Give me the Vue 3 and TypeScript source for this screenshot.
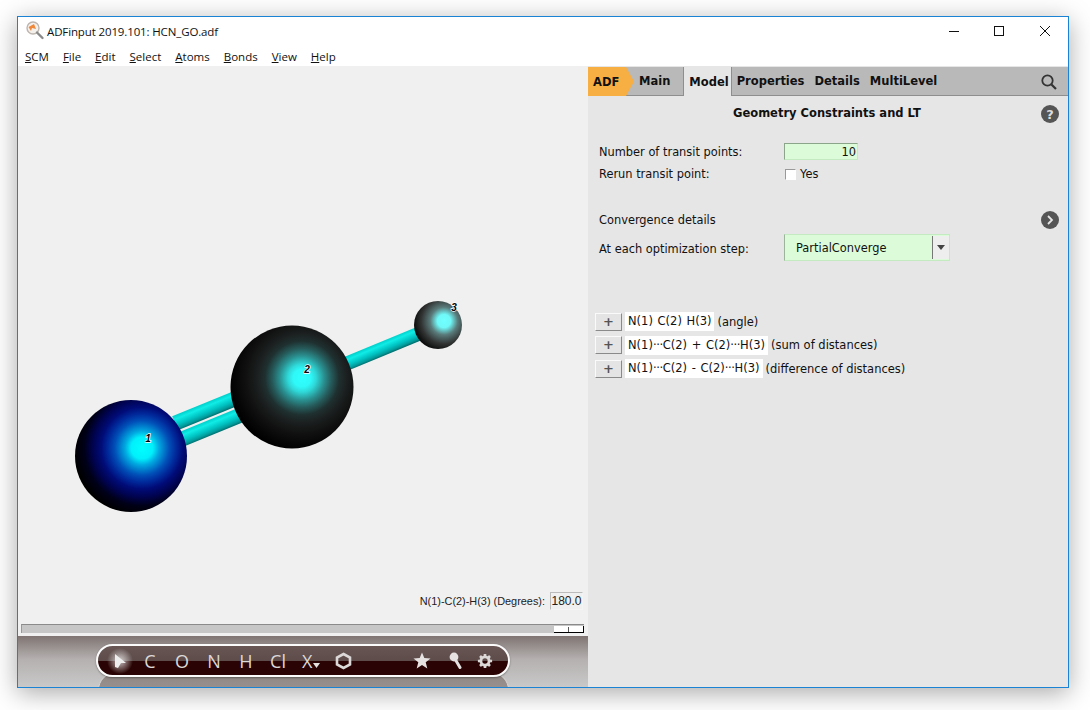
<script setup lang="ts">
const menus = [
  { k: 'S', r: 'CM' }, { k: 'F', r: 'ile' }, { k: 'E', r: 'dit' }, { k: 'S', r: 'elect' },
  { k: 'A', r: 'toms' }, { k: 'B', r: 'onds' }, { k: 'V', r: 'iew' }, { k: 'H', r: 'elp' },
]
const constraints = [
  { label: ['N(1) C(2) H(3)'], note: '(angle)' },
  { label: ['N(1)', 'C(2) + C(2)', 'H(3)'], note: '(sum of distances)' },
  { label: ['N(1)', 'C(2) - C(2)', 'H(3)'], note: '(difference of distances)' },
]
const elements = ['C', 'O', 'N', 'H', 'Cl']
</script>

<template>
  <div class="stage">
    <div class="window">
      <header class="titlebar">
        <svg class="appicon" width="20" height="20" viewBox="0 0 20 20">
          <circle cx="8" cy="7" r="6" fill="#f4f0ec" stroke="#bdb5ae" stroke-width="1.4" />
          <path d="M3.5 6 L9 3 L11 8 L7 7 L6 10 Z" fill="#f0883a" />
          <path d="M12 11.5 L17.5 17" stroke="#8a8a8a" stroke-width="2.4" stroke-linecap="round" />
        </svg>
        <span class="title">ADFinput 2019.101: HCN_GO.adf</span>
        <div class="winbtns">
          <svg width="10" height="10" viewBox="0 0 10 10"><path d="M0 5.5H10" stroke="#111" /></svg>
          <svg width="10" height="10" viewBox="0 0 10 10"><rect x=".5" y=".5" width="9" height="9" fill="none" stroke="#111" /></svg>
          <svg class="closebtn" width="10" height="10" viewBox="0 0 10 10"><path d="M0 0L10 10M10 0L0 10" stroke="#111" /></svg>
        </div>
      </header>
      <nav class="menubar">
        <span v-for="m in menus" :key="m.k + m.r"><u>{{ m.k }}</u>{{ m.r }}</span>
      </nav>
      <div class="body">
        <section class="left">
          <div class="viewer">
            <svg class="molecule" width="570" height="556" viewBox="18 66 570 556">
              <defs>
                <radialGradient id="gN" gradientUnits="userSpaceOnUse" cx="142" cy="448" r="68" fx="142" fy="448">
                  <stop offset="0" stop-color="#00ffff" />
                  <stop offset=".16" stop-color="#00f0fb" />
                  <stop offset=".25" stop-color="#00a8e0" />
                  <stop offset=".4" stop-color="#0050b8" />
                  <stop offset=".5" stop-color="#002a9c" />
                  <stop offset=".6" stop-color="#000c78" />
                  <stop offset=".72" stop-color="#000350" />
                  <stop offset=".85" stop-color="#000018" />
                  <stop offset="1" stop-color="#000000" />
                </radialGradient>
                <radialGradient id="gC" gradientUnits="userSpaceOnUse" cx="302" cy="378" r="74" fx="302" fy="378">
                  <stop offset="0" stop-color="#2fffff" />
                  <stop offset=".12" stop-color="#2ff8f8" />
                  <stop offset=".19" stop-color="#2fd8d8" />
                  <stop offset=".3" stop-color="#2a9090" />
                  <stop offset=".4" stop-color="#265a5a" />
                  <stop offset=".5" stop-color="#1f3030" />
                  <stop offset=".6" stop-color="#1c2020" />
                  <stop offset=".75" stop-color="#111111" />
                  <stop offset=".9" stop-color="#060606" />
                  <stop offset="1" stop-color="#000000" />
                </radialGradient>
                <radialGradient id="gH" gradientUnits="userSpaceOnUse" cx="444" cy="321" r="30" fx="444" fy="321">
                  <stop offset="0" stop-color="#70ffff" />
                  <stop offset=".22" stop-color="#70f8f8" />
                  <stop offset=".46" stop-color="#5a7a7a" />
                  <stop offset=".75" stop-color="#333535" />
                  <stop offset="1" stop-color="#0c0c0c" />
                </radialGradient>
                <linearGradient id="b1" gradientUnits="userSpaceOnUse" x1="202.15" y1="404.1" x2="207.85" y2="417.9">
                  <stop offset="0" stop-color="#00d0cc" /><stop offset=".25" stop-color="#10ece6" /><stop offset=".6" stop-color="#00c4c4" /><stop offset=".85" stop-color="#009c9c" /><stop offset="1" stop-color="#007070" />
                </linearGradient>
                <linearGradient id="b2" gradientUnits="userSpaceOnUse" x1="202.15" y1="422.8" x2="207.85" y2="436.6">
                  <stop offset="0" stop-color="#00d0cc" /><stop offset=".25" stop-color="#10ece6" /><stop offset=".6" stop-color="#00c4c4" /><stop offset=".85" stop-color="#009c9c" /><stop offset="1" stop-color="#007070" />
                </linearGradient>
                <linearGradient id="b3" gradientUnits="userSpaceOnUse" x1="377.3" y1="343.3" x2="382.7" y2="356.1">
                  <stop offset="0" stop-color="#00d0cc" /><stop offset=".25" stop-color="#10ece6" /><stop offset=".6" stop-color="#00c4c4" /><stop offset=".85" stop-color="#009c9c" /><stop offset="1" stop-color="#007070" />
                </linearGradient>
              </defs>
              <line x1="175" y1="423.3" x2="240" y2="396.7" stroke="url(#b1)" stroke-width="15" />
              <line x1="178" y1="440.8" x2="250" y2="411.2" stroke="url(#b2)" stroke-width="15" />
              <line x1="345" y1="364.3" x2="420" y2="333.3" stroke="url(#b3)" stroke-width="14" />
              <circle cx="131" cy="456" r="56" fill="url(#gN)" />
              <circle cx="292" cy="387" r="61.5" fill="url(#gC)" />
              <circle cx="438" cy="325" r="24" fill="url(#gH)" />
              <text x="148" y="441.5" class="atom">1</text>
              <text x="307" y="373" class="atom">2</text>
              <text x="454" y="311" class="atom">3</text>
            </svg>
            <div class="measure">
              <span>N(1)-C(2)-H(3) (Degrees):</span>
              <span class="degbox">180.0</span>
            </div>
          </div>
          <div class="slider">
            <div class="track">
              <div class="handle"><i /></div>
            </div>
          </div>
          <div class="toolbar">
            <div class="reflection" />
            <div class="pill">
              <div class="pill-items">
                <svg class="arrow" width="26" height="26" viewBox="0 0 26 26">
                  <defs>
                    <radialGradient id="glow"><stop offset="0" stop-color="#fff" stop-opacity=".75" /><stop offset="1" stop-color="#fff" stop-opacity="0" /></radialGradient>
                  </defs>
                  <circle cx="13" cy="13" r="13" fill="url(#glow)" />
                  <path d="M8 6 L19 15 L14 15 L11 20 L8 19 Z" fill="#eee" />
                </svg>
                <span v-for="e in elements" :key="e" class="el">{{ e }}</span>
                <span class="el x">X<svg width="7" height="5" viewBox="0 0 7 5"><path d="M0 0H7L3.5 5Z" fill="#e6e0e0" /></svg></span>
                <svg class="hex" width="17" height="18" viewBox="0 0 17 18">
                  <path d="M8.5 2 L15 5.5 V12.5 L8.5 16 L2 12.5 V5.5 Z" fill="none" stroke="#dcd8d8" stroke-width="2.6" />
                </svg>
                <span class="spacer" />
                <svg width="18" height="17" viewBox="0 0 18 17">
                  <path d="M9 0.5 L11.3 6 L17.5 6.4 L12.7 10.2 L14.3 16.4 L9 13 L3.7 16.4 L5.3 10.2 L0.5 6.4 L6.7 6 Z" fill="#e6e2e2" />
                </svg>
                <svg class="pin" width="13" height="17" viewBox="0 0 13 17">
                  <circle cx="5" cy="5" r="4.4" fill="#e6e2e2" />
                  <path d="M6 7 L11 15.5" stroke="#e6e2e2" stroke-width="3" stroke-linecap="round" />
                </svg>
                <svg class="gear" width="16" height="16" viewBox="0 0 18 18">
                  <circle cx="9" cy="9" r="4.6" fill="none" stroke="#dcd8d8" stroke-width="3.2" />
                  <path d="M9 1V4M9 14V17M1 9H4M14 9H17M3.4 3.4L5.5 5.5M12.5 12.5L14.6 14.6M14.6 3.4L12.5 5.5M5.5 12.5L3.4 14.6" stroke="#dcd8d8" stroke-width="3" />
                </svg>
              </div>
            </div>
          </div>
        </section>

        <section class="right">
          <div class="tabs">
            <span class="tab-adf">ADF</span>
            <span class="tab first">Main</span>
            <span class="tab active">Model</span>
            <span class="tab">Properties</span>
            <span class="tab">Details</span>
            <span class="tab">MultiLevel</span>
            <svg class="search" width="18" height="18" viewBox="0 0 18 18">
              <circle cx="7.5" cy="7.5" r="5.2" fill="none" stroke="#333" stroke-width="1.8" />
              <path d="M11.5 11.5L16 16" stroke="#333" stroke-width="2.2" />
            </svg>
          </div>
          <div class="panel">
            <div class="heading">
              <h1>Geometry Constraints and LT</h1>
              <span class="round">?</span>
            </div>
            <div class="row r1">
              <label>Number of transit points:</label>
              <span class="num">10</span>
            </div>
            <div class="row r2">
              <label>Rerun transit point:</label>
              <span class="check" /><span>Yes</span>
            </div>
            <div class="row r3">
              <label>Convergence details</label>
              <span class="round chev">
                <svg width="8" height="10" viewBox="0 0 8 10"><path d="M2 1L6 5L2 9" fill="none" stroke="#e6e6e6" stroke-width="1.8" /></svg>
              </span>
            </div>
            <div class="row r4">
              <label>At each optimization step:</label>
              <div class="combo">
                <span class="combo-text">PartialConverge</span>
                <span class="combo-btn"><svg width="8" height="5" viewBox="0 0 8 5"><path d="M0 0H8L4 5Z" fill="#444" /></svg></span>
              </div>
            </div>
            <div class="constraints">
              <div v-for="c in constraints" :key="c.note" class="constraint">
                <span class="plus">+</span>
                <span class="pair"><template v-for="(part, i) in c.label" :key="i"><span v-if="i > 0" class="dots">···</span>{{ part }}</template></span>
                <span class="note">{{ c.note }}</span>
              </div>
            </div>
          </div>
        </section>
      </div>
    </div>
  </div>
</template>

<style>
html, body { margin: 0; background: #fff; }
</style>

<style scoped>
.stage {
  box-sizing: border-box;
  width: 1090px;
  height: 710px;
  padding: 16px 0 0 17px;
  overflow: hidden;
}
.window {
  box-sizing: border-box;
  width: 1052px;
  height: 672px;
  border: 1px solid #1a83d4;
  background: #fff;
  box-shadow: 0 5px 24px rgba(0, 0, 0, .34);
  display: flex;
  flex-direction: column;
  font-family: "DejaVu Sans", sans-serif;
  color: #111;
}
.titlebar {
  height: 29px;
  display: flex;
  align-items: center;
  padding-left: 7px;
  flex: none;
}
.appicon { margin-right: 2px; margin-top: -2px; }
.title { font: 11.5px "Open Sans", sans-serif; letter-spacing: -.13px; color: #111; }
.winbtns {
  margin-left: auto;
  margin-top: -1px;
  display: flex;
  gap: 35px;
  padding-right: 18px;
}
.closebtn { margin-left: 1px; }
.menubar {
  height: 20px;
  display: flex;
  align-items: center;
  gap: 14px;
  padding-left: 7px;
  font: 11.5px "Open Sans", sans-serif;
  flex: none;
}
.body { flex: 1; display: flex; min-height: 0; }
.left { width: 570px; flex: none; display: flex; flex-direction: column; background: #f0f0f0; }
.viewer { position: relative; height: 556px; flex: none; }
.molecule { position: absolute; left: 0; top: 0; }
.atom {
  font: italic 700 10px "Liberation Sans", sans-serif;
  fill: #000;
  stroke: #fff;
  stroke-width: 1.4px;
  paint-order: stroke;
  text-anchor: middle;
}
.measure {
  position: absolute;
  right: 5px;
  bottom: 12px;
  display: flex;
  align-items: center;
  gap: 5px;
  font: 10.9px "Liberation Sans", sans-serif;
  color: #222;
}
.degbox {
  box-sizing: border-box;
  width: 33px;
  height: 18px;
  line-height: 16px;
  text-align: center;
  border: 1px solid #bbb;
  border-right-color: #f4f4f4;
  border-bottom-color: #f4f4f4;
  font-size: 12px;
}
.slider { height: 14px; flex: none; padding: 2px 4px 0 3px; box-sizing: border-box; }
.track {
  position: relative;
  height: 9px;
  box-sizing: border-box;
  background: #c6c6c6;
  border-top: 1px solid #8a8a8a;
  border-left: 1px solid #999;
}
.handle {
  position: absolute;
  right: 0;
  top: 1px;
  width: 30px;
  height: 7px;
  box-sizing: border-box;
  background: #fff;
  border-right: 1px solid #000;
  border-bottom: 1px solid #000;
}
.handle i { position: absolute; left: 14px; top: 1px; bottom: 0; border-left: 1px solid #555; }
.toolbar {
  position: relative;
  flex: 1;
  overflow: hidden;
  background: linear-gradient(#7f7472, #b4b0af 45%, #c9c9c9);
  display: flex;
  align-items: flex-start;
  padding: 8px 0 0 78px;
}
.reflection {
  position: absolute;
  left: 80px;
  top: 36px;
  width: 411px;
  height: 40px;
  box-sizing: border-box;
  border: 1.5px solid #d8d4d4;
  border-radius: 18px;
  background: linear-gradient(#8f8683, #a5a09f);
}
.pill {
  position: relative;
  box-sizing: border-box;
  width: 414px;
  height: 33px;
  border: 2px solid #fbfbfb;
  border-radius: 17px;
  background: linear-gradient(#675654 0, #5d4c4a 50%, #2a0404 50%, #2a0404 100%);
  box-shadow: 0 1px 2px rgba(0, 0, 0, .35);
}
.pill-items {
  position: absolute;
  inset: 0;
  display: flex;
  align-items: center;
  padding-left: 9px;
  color: #dcd8d8;
  font: 18px "Open Sans", sans-serif;
}
.arrow { flex: none; margin-right: 1px; }
.el { width: 32px; text-align: center; flex: none; }
.x { display: flex; align-items: center; gap: 1px; padding-left: 8px; box-sizing: border-box; }
.x svg { margin-top: 9px; }
.hex { margin-left: 9px; flex: none; }
.spacer { width: 61px; flex: none; }
.pin { margin-left: 17.5px; flex: none; }
.gear { margin-left: 15.5px; flex: none; }
.right { flex: 1; display: flex; flex-direction: column; background: #e6e6e6; min-width: 0; }
.tabs {
  margin-top: 1px;
  height: 29px;
  box-sizing: border-box;
  flex: none;
  display: flex;
  align-items: stretch;
  background: #b9b9b9;
  border-bottom: 1px solid #8e8e8e;
  font: 700 11.5px "DejaVu Sans", sans-serif;
  position: relative;
}
.tab-adf {
  width: 46px;
  padding-left: 5px;
  box-sizing: border-box;
  background: #f7ae42;
  clip-path: polygon(0 0, 38px 0, 46px 50%, 38px 100%, 0 100%);
  display: flex;
  align-items: center;
  margin-bottom: -1px;
}
.tab { display: flex; align-items: center; padding: 0 5px; }
.tab.first { padding: 0 13px 0 5px; border-right: 1px solid #8e8e8e; }
.tab.active {
  background: #e6e6e6;
  padding: 0 2px 0 5px;
  margin-bottom: -1px;
  border-right: 1px solid #8e8e8e;
}
.search { position: absolute; right: 10px; top: 6px; }
.panel { flex: 1; position: relative; font-size: 11.4px; padding: 0 9px 0 11px; }
.heading { position: relative; height: 35px; }
h1 {
  margin: 0;
  font: 700 11.5px "DejaVu Sans", sans-serif;
  padding-top: 10px;
  color: #111;
  position: absolute;
  left: 134px;
}
.round {
  position: absolute;
  right: 0;
  top: 9px;
  width: 18px;
  height: 18px;
  border-radius: 50%;
  background: #555;
  color: #ddd;
  font-weight: 700;
  font-size: 13px;
  display: flex;
  align-items: center;
  justify-content: center;
}
.row { display: flex; align-items: center; position: relative; }
label { width: 185px; flex: none; }
.r1 { margin-top: 11px; height: 18px; }
.r1 label { padding-top: 1px; }
.r2 { margin-top: 5px; height: 18px; }
.r3 { margin-top: 28px; height: 18px; }
.r3 .round { top: 0; }
.r4 { margin-top: 5px; height: 26px; }
.r4 label { padding-top: 3px; }
.num {
  box-sizing: border-box;
  width: 74px;
  height: 17px;
  line-height: 16px;
  text-align: right;
  padding-right: 1px;
  background: #dcfcd9;
  border: 1px solid #c4eac1;
  border-left-color: #8aa58a;
  border-top-color: #8aa58a;
}
.check {
  box-sizing: border-box;
  width: 11px;
  height: 11px;
  background: #fff;
  border: 1px solid #999;
  border-right-color: #fff;
  border-bottom-color: #fff;
  margin: 0 4px 0 1px;
}
.combo {
  box-sizing: border-box;
  width: 166px;
  height: 27px;
  display: flex;
  background: #dcfcd9;
  border: 1px solid #c4eac1;
  border-left-color: #9ab59a;
}
.combo-text { flex: 1; padding-left: 11px; line-height: 27px; }
.combo-btn {
  width: 16px;
  margin: 1px 0;
  background: #eeeeee;
  border-left: 1px solid #777;
  display: flex;
  align-items: center;
  justify-content: center;
}
.constraints { margin-top: 52px; margin-left: -4px; display: flex; flex-direction: column; gap: 4.5px; font-size: 11.5px; }
.constraint { display: flex; align-items: center; height: 19px; }
.plus {
  box-sizing: border-box;
  width: 27px;
  height: 18px;
  background: #e4e4e4;
  border: 1px solid #fafafa;
  border-right-color: #8a8a8a;
  border-bottom-color: #8a8a8a;
  text-align: center;
  line-height: 15px;
  font-size: 13px;
  font-weight: 700;
  color: #555;
  margin-right: 3px;
}
.pair { background: #fff; padding: 0 3px; line-height: 19px; white-space: nowrap; margin-right: 3px; word-spacing: 1px; }
.dots { letter-spacing: -.4px; }
.note { white-space: nowrap; }
</style>
